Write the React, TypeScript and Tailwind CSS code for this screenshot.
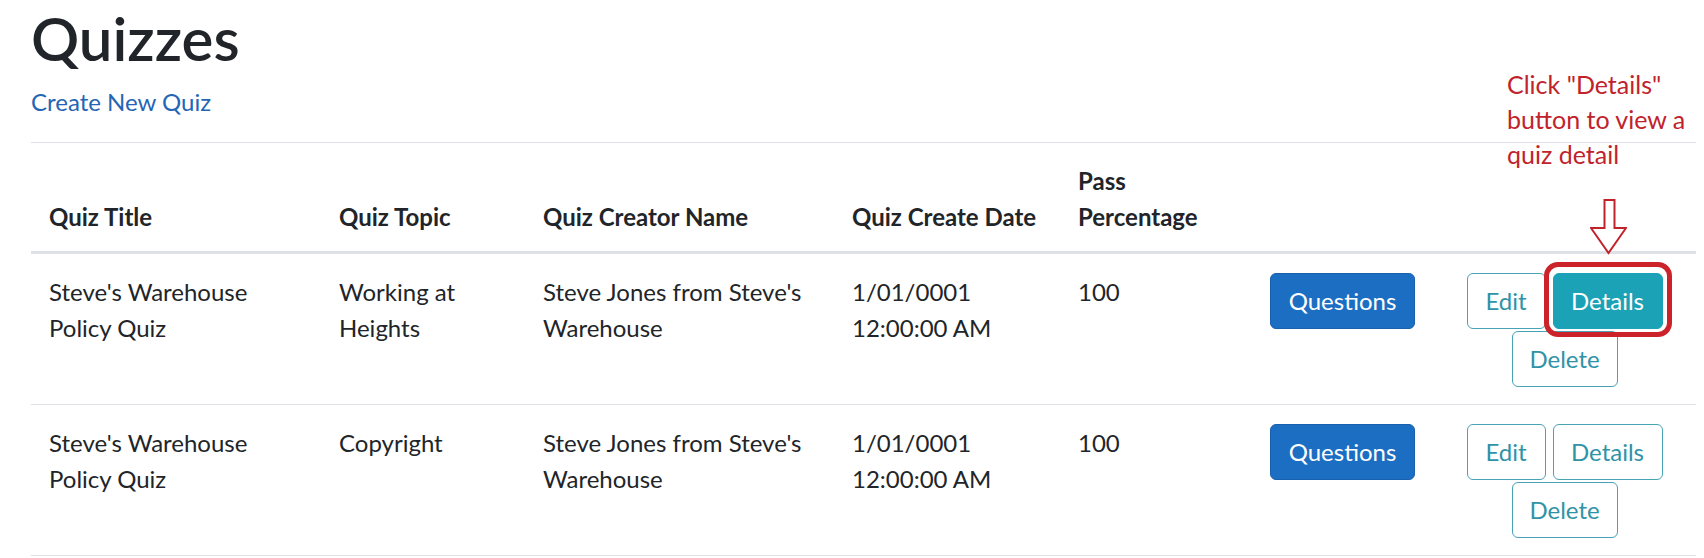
import React from "react";

type Row = {
  title: string;
  topic: string;
  creator: string;
  date: string;
  pass: string;
  highlight?: boolean;
};

const rows: Row[] = [
  {
    title: "Steve's Warehouse Policy Quiz",
    topic: "Working at Heights",
    creator: "Steve Jones from Steve's Warehouse",
    date: "1/01/0001 12:00:00 AM",
    pass: "100",
    highlight: true,
  },
  {
    title: "Steve's Warehouse Policy Quiz",
    topic: "Copyright",
    creator: "Steve Jones from Steve's Warehouse",
    date: "1/01/0001 12:00:00 AM",
    pass: "100",
  },
];

const th =
  "align-bottom text-left font-bold px-[18px] pt-[20px] pb-[16px] border-t border-b-[3px] border-[#dee2e6]";
const td = "align-top px-[18px] pt-[19px] pb-[17px] border-b border-[#dee2e6]";
const tdText = "align-top px-[18px] pt-[20px] pb-[16px] border-b border-[#dee2e6]";

function OutlineBtn({ label, w, filled }: { label: string; w: string; filled?: boolean }) {
  return (
    <span
      className={
        "flex h-[56px] items-center justify-center rounded-[6px] border text-[24px] leading-[36px] " +
        w +
        (filled
          ? " bg-[#1ba2b6] border-[#1ba2b6] text-white"
          : " bg-white border-[#48a3b5] text-[#2f93a7]")
      }
    >
      {label}
    </span>
  );
}

export default function App() {
  return (
    <div className="relative h-[558px] w-full overflow-hidden bg-white pl-[31px] pr-[8px] text-[#212529] font-['Lato','Noto_Sans',sans-serif]">
      <h1 className="mt-[2px] mb-[10px] text-[60px] leading-[72px] font-semibold">Quizzes</h1>
      <p className="mb-[22px] text-[24px] leading-[36px]">
        <a className="text-[#2565b5]">Create New Quiz</a>
      </p>

      <table className="w-full table-fixed border-separate border-spacing-0 text-[24px] leading-[36px]">
        <colgroup>
          <col className="w-[290px]" />
          <col className="w-[204px]" />
          <col className="w-[309px]" />
          <col className="w-[226px]" />
          <col className="w-[192px]" />
          <col className="w-[181px]" />
          <col className="w-[263px]" />
        </colgroup>
        <thead>
          <tr>
            <th className={th}>Quiz Title</th>
            <th className={th}>Quiz Topic</th>
            <th className={th}>Quiz Creator Name</th>
            <th className={th + " whitespace-nowrap"}>Quiz Create Date</th>
            <th className={th}>Pass Percentage</th>
            <th className={th}></th>
            <th className={th}></th>
          </tr>
        </thead>
        <tbody>
          {rows.map((r, i) => (
            <tr key={i}>
              <td className={tdText}>{r.title}</td>
              <td className={tdText}>{r.topic}</td>
              <td className={tdText}>{r.creator}</td>
              <td className={tdText}>{r.date}</td>
              <td className={tdText}>{r.pass}</td>
              <td className={td}>
                <span className="flex h-[56px] w-[145px] items-center justify-center rounded-[6px] border border-[#1861ac] bg-[#1b6ec2] text-white">
                  Questions
                </span>
              </td>
              <td className={td}>
                <div className="flex flex-wrap justify-center gap-x-[7px] gap-y-[2px]">
                  <OutlineBtn label="Edit" w="w-[79px]" />
                  <span className="relative">
                    <OutlineBtn label="Details" w="w-[110px]" filled={r.highlight} />
                    {r.highlight && (
                      <span className="pointer-events-none absolute -left-[9px] -right-[9px] -top-[11px] -bottom-[8px] rounded-[14px] border-[5px] border-[#cc2229]" />
                    )}
                  </span>
                  <OutlineBtn label="Delete" w="w-[106px]" />
                </div>
              </td>
            </tr>
          ))}
        </tbody>
      </table>

      {/* annotation overlay */}
      <div className="pointer-events-none absolute left-[1507px] top-[67px] text-[25px] leading-[35px] text-[#c0232b]">
        <div>Click "Details"</div>
        <div>button to view a</div>
        <div>quiz detail</div>
      </div>
      <svg
        className="pointer-events-none absolute left-[1590px] top-[199px]"
        width="37"
        height="56"
        viewBox="0 0 37 56"
        fill="none"
      >
        <path
          d="M14.5 1 L24.5 1 L24.5 29 L36 29 L18.5 54 L1 29 L14.5 29 Z"
          stroke="#c0232b"
          strokeWidth="2"
          strokeLinejoin="miter"
        />
      </svg>
    </div>
  );
}
